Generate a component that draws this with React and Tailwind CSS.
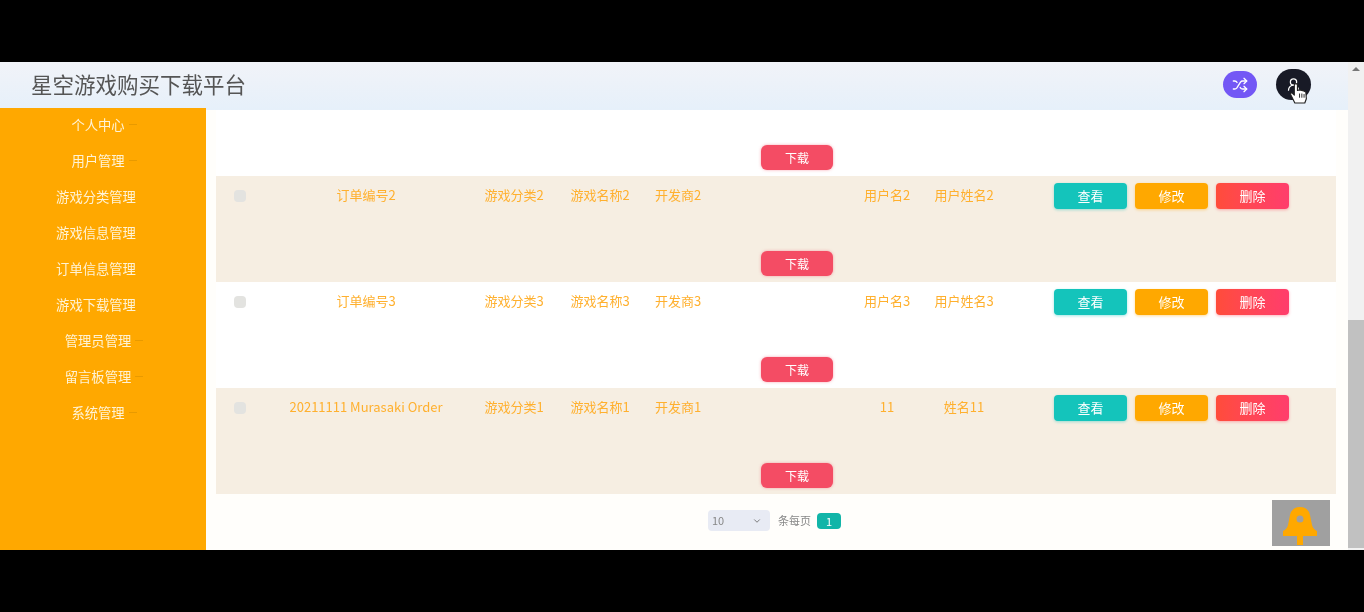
import { Shuffle, UserRound, ChevronDown } from 'lucide-react';

const menu = [
  { label: '个人中心', arrow: true },
  { label: '用户管理', arrow: true },
  { label: '游戏分类管理' },
  { label: '游戏信息管理' },
  { label: '订单信息管理' },
  { label: '游戏下载管理' },
  { label: '管理员管理', arrow: true },
  { label: '留言板管理', arrow: true },
  { label: '系统管理', arrow: true },
];

const rows = [
  { order: '订单编号2', type: '游戏分类2', name: '游戏名称2', dev: '开发商2', user: '用户名2', real: '用户姓名2', bg: 'bg-[#f6eee2]' },
  { order: '订单编号3', type: '游戏分类3', name: '游戏名称3', dev: '开发商3', user: '用户名3', real: '用户姓名3', bg: 'bg-white' },
  { order: '20211111 Murasaki Order', type: '游戏分类1', name: '游戏名称1', dev: '开发商1', user: '11', real: '姓名11', bg: 'bg-[#f6eee2]' },
];

const DownloadButton = () => (
  <div className="flex justify-center pl-[42px]">
    <button className="w-[72px] h-[25px] rounded-md bg-[#f44c64] text-white text-xs shadow-[0_0_3px_rgba(244,76,100,0.5)]">下载</button>
  </div>
);

const TableRow = ({ row }) => (
  <div className={`h-[106px] flex flex-col justify-between pt-[7px] pb-[6px] ${row.bg}`}>
    <div className="grid grid-cols-[48px_204px_92px_80px_76px_138px_66px_88px_1fr] items-center h-[26px] text-[13px] text-center text-[#ffb02e]">
      <div className="flex justify-center">
        <div className="w-3 h-3 rounded-sm bg-[#e3e3e0]"></div>
      </div>
      <div className="whitespace-nowrap pb-[2px]">{row.order}</div>
      <div className="pb-[2px]">{row.type}</div>
      <div className="pb-[2px]">{row.name}</div>
      <div className="pb-[2px]">{row.dev}</div>
      <div></div>
      <div className="pb-[2px]">{row.user}</div>
      <div className="pb-[2px] whitespace-nowrap">{row.real}</div>
      <div className="flex gap-2 pl-[46px] text-[13px] text-white">
        <button className="w-[73px] h-[26px] rounded-sm bg-[#14c4bb] shadow-[0_1px_3px_rgba(20,196,187,0.4)]">查看</button>
        <button className="w-[73px] h-[26px] rounded-sm bg-[#ffa800] shadow-[0_1px_3px_rgba(255,168,0,0.4)]">修改</button>
        <button className="w-[73px] h-[26px] rounded-sm bg-gradient-to-r from-[#ff4c3a] to-[#ff3d6c] shadow-[0_1px_3px_rgba(255,70,90,0.4)]">删除</button>
      </div>
    </div>
    <DownloadButton />
  </div>
);

export default function App() {
  return (
    <div className="w-[1364px] h-[612px] bg-black overflow-hidden font-['Noto_Sans_CJK_SC','Liberation_Sans',sans-serif]">
      <div className="h-[62px]"></div>

      <div className="relative h-[488px] flex blur-[0.6px]">
        <div className="flex-1 min-w-0 flex flex-col">
          {/* Top bar */}
          <header className="h-[48px] shrink-0 flex items-center justify-between pl-[31px] pr-[37px] pb-[3px] bg-gradient-to-b from-[#f1f3f8] to-[#e6f0fa]">
            <h1 className="text-[21.5px] font-normal text-[#555]">星空游戏购买下载平台</h1>
            <div className="flex items-center gap-[19px]">
              <button className="w-[34px] h-[27px] rounded-full bg-[#7357f5] flex items-center justify-center text-white">
                <Shuffle size={16} />
              </button>
              <button className="relative w-[35px] h-[31px] rounded-full bg-[#181a26] flex items-center justify-center text-white">
                <UserRound size={15} />
                <svg className="absolute left-[11px] top-[13px] w-[23px] h-[22px]" viewBox="1 1 17 21">
                  <path d="M6 21 L2 13 Q1.5 11 3.5 11.5 L5.5 13.5 L5.5 3.5 Q7 1.5 8.5 3.5 L8.5 9 L10.5 8.5 L12.5 9 L14.5 9.5 L16.5 10.5 L17 17 L15.5 21 Z" fill="#fff" stroke="#222" strokeWidth="1.1" strokeLinejoin="round" />
                  <path d="M10.5 12 V16 M12.7 12 V16 M14.8 12.5 V16" stroke="#222" strokeWidth="0.9" />
                </svg>
              </button>
            </div>
          </header>

          <div className="flex-1 flex min-h-0">
            {/* Sidebar */}
            <aside className="w-[206px] -mt-[2px] bg-[#ffa800] text-[13.3px] text-[#fff3d6]">
              {menu.map((item) => (
                <div key={item.label} className={`h-9 pb-[3px] flex items-center justify-center gap-1 ${item.arrow ? 'pl-[2px]' : 'pr-[14px]'}`}>
                  <span>{item.label}</span>
                  {item.arrow && <span className="w-2 h-px bg-[#e89a00]"></span>}
                </div>
              ))}
            </aside>

            {/* Table area */}
            <main className="flex-1 min-w-0 pl-[10px] pr-[12px] bg-[#fffefb]">
              <div className="h-[66px] flex flex-col justify-end pb-[6px] bg-white">
                <DownloadButton />
              </div>
              {rows.map((row) => (
                <TableRow key={row.order} row={row} />
              ))}
              <div className="flex items-center pt-[16px] pl-[492px] text-[11px] text-[#888]">
                <div className="w-[62px] h-[21px] pl-1 pr-2 rounded-sm bg-[#e8ebf4] flex items-center justify-between">
                  <span>10</span>
                  <ChevronDown size={10} className="text-[#666]" />
                </div>
                <span className="ml-2 whitespace-nowrap">条每页</span>
                <div className="ml-[6px] w-6 h-[16px] rounded-sm bg-[#12b5a8] text-white text-center leading-[16px]">1</div>
              </div>
            </main>
          </div>
        </div>

        {/* Scrollbar */}
        <div className="w-4 shrink-0 bg-[#f1f1f1] flex flex-col items-center">
          <div className="h-[258px] w-full pt-[5px] flex justify-center">
            <div className="w-0 h-0 border-x-[4px] border-x-transparent border-b-[4px] border-b-[#777]"></div>
          </div>
          <div className="h-[228px] w-full bg-[#c1c1c1]"></div>
        </div>

        {/* Floating bell */}
        <div className="absolute left-[1272px] top-[438px] w-[58px] h-[46px] bg-[#a0a0a0]">
          <svg viewBox="0 0 58 46" className="w-[58px] h-[46px]">
            <path fillRule="evenodd" d="M11 36 L11 31 Q15 29 16 25 L18 15 Q20 7 28 7 Q36 7 38 15 L40 25 Q41 29 45 31 L45 36 Z M28 15.5 A3.5 3.5 0 1 0 28 22.5 A3.5 3.5 0 1 0 28 15.5 Z" fill="#ffa800" />
            <rect x="25" y="36" width="6" height="9" fill="#ffa800" />
          </svg>
        </div>
      </div>
    </div>
  );
}
